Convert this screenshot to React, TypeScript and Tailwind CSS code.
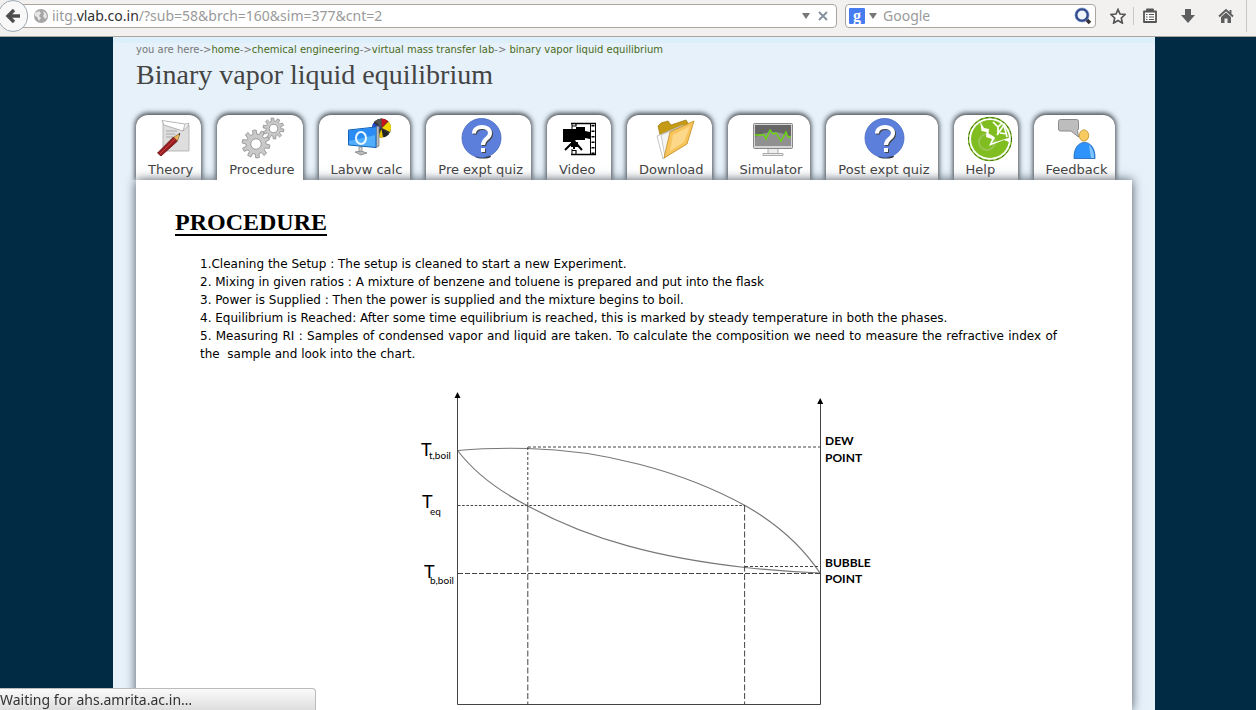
import type { ReactNode } from "react";

function gearPath(cx: number, cy: number, outer: number, inner: number, teeth: number) {
  const step = (Math.PI * 2) / teeth;
  const pts: string[] = [];
  for (let i = 0; i < teeth; i++) {
    const a = i * step + 0.2;
    const corners: [number, number][] = [
      [inner, -0.32],
      [outer, -0.2],
      [outer, 0.2],
      [inner, 0.32],
    ];
    for (const [r, o] of corners) {
      pts.push(`${(cx + r * Math.cos(a + o * step)).toFixed(2)} ${(cy + r * Math.sin(a + o * step)).toFixed(2)}`);
    }
  }
  return `M${pts.join("L")}Z`;
}

function Icon({ children }: { children: ReactNode }) {
  return (
    <svg viewBox="0 0 44 44" className="h-11 w-11 overflow-visible" aria-hidden="true">
      {children}
    </svg>
  );
}

const TheoryIcon = () => (
  <Icon>
    <path d="M14 5L40 8V34H14Z" fill="#dedede" stroke="#aaa" strokeWidth=".8" />
    <path d="M13 3.500L36 7L40 6.500L34 14L15 8Z" fill="#fff" stroke="#999" strokeWidth=".7" />
    <path d="M36 7L34 14L39.500 9" fill="#eee" stroke="#999" strokeWidth=".6" />
    <path d="M17 14H28M17 17H26M17 20H24" stroke="#aaa" strokeWidth="1" />
    <path d="M8.500 36L24.500 20L28.500 24L12 39Z" fill="#9c1c1f" stroke="#5e0d10" strokeWidth=".8" />
    <path d="M24.500 20L31 16.500L28.500 24Z" fill="#e8b65a" stroke="#7b4b19" strokeWidth=".5" />
    <path d="M29.300 17L31 16L30.500 18.500Z" fill="#222" />
    <path d="M11 37L26 21.800" stroke="#c54a4a" strokeWidth="1" />
  </Icon>
);

const ProcedureIcon = () => (
  <Icon>
    <g fill="#c9c9c9" stroke="#8b8b8b" strokeWidth=".8" strokeLinejoin="round">
      <path d={gearPath(16, 27, 14, 10, 10)} />
      <path d={gearPath(33.5, 11.5, 10.5, 7.4, 10)} />
      <circle cx="16" cy="27" r="5.2" fill="#fff" />
      <circle cx="33.5" cy="11.5" r="4.2" fill="#fff" />
    </g>
  </Icon>
);

const LabvwIcon = () => (
  <Icon>
    <circle cx="37.500" cy="11" r="9.500" fill="#333" />
    <path d="M37.500 11V1.500A9.500 9.500 0 0 1 44 4Z" fill="#c8131b" />
    <path d="M38 11L44.500 4.500A9.500 9.500 0 0 1 46 15Z" fill="#f2d500" />
    <path d="M37.500 12L45 17A9.500 9.500 0 0 1 40 20.200Z" fill="#222" />
    <path d="M37.500 12L39 20.500A9.500 9.500 0 0 1 34 20Z" fill="#e3c500" />
    <path d="M37.500 11L29.500 6A9.500 9.500 0 0 0 28.500 14Z" fill="#2547d0" />
    <path d="M37.500 11L31 4A9.500 9.500 0 0 1 37.500 1.500Z" fill="#555" />
    <path d="M15 30H18V36H15Z" fill="#ddd" stroke="#777" strokeWidth=".7" />
    <path d="M11 35L17 38L23 36L17 34Z" fill="#bbb" stroke="#777" strokeWidth=".7" />
    <path d="M32 10L35 9V29L32 30.500Z" fill="#bbb" stroke="#777" strokeWidth=".7" />
    <path d="M4.500 13L32 10V30.500L4.500 28Z" fill="#51aefc" stroke="#1263b5" strokeWidth="1" />
    <path d="M5 13.500L31.500 10.500V18L5 24Z" fill="#2b8bf4" />
    <ellipse cx="17" cy="21" rx="5" ry="6" fill="none" stroke="#e9f8ff" strokeWidth="2" />
  </Icon>
);

const QuizIcon = () => (
  <Icon>
    <ellipse cx="24" cy="39.500" rx="8" ry="2" fill="#333" />
    <circle cx="22.500" cy="21" r="19.500" fill="#5b7fdb" stroke="#4467c3" strokeWidth=".8" />
    <g fill="none" stroke="#444" strokeWidth="4" transform="translate(1 1)">
      <path d="M15 16.500C15 8 31 8 31 16C31 22 24 21 24 28" />
      <path d="M24 31V35" />
    </g>
    <g fill="none" stroke="#fff" strokeWidth="4">
      <path d="M15 16.500C15 8 31 8 31 16C31 22 24 21 24 28" />
      <path d="M24 31V35" />
    </g>
  </Icon>
);

const VideoIcon = () => (
  <Icon>
    <path d="M12 6.500H37M12 37.500H37" stroke="#000" strokeWidth="1.500" />
    <path d="M13 6V12M13 32V38M31.500 6V38M36.500 6V38" stroke="#000" />
    <path d="M34 8V37" stroke="#000" strokeWidth="3" strokeDasharray="1.500 4" />
    <path d="M13 9H17V6M13 33.500H17V37" fill="none" stroke="#000" strokeWidth="1.200" />
    <path d="M4 12H17V10H26V14L31 15V22L26 21V23H17L14 25H4Z" fill="#000" />
    <path d="M15 24L6 33M15 24L23 33M15 24V32M13 26H18V29H13Z" stroke="#000" strokeWidth="2" />
  </Icon>
);

const DownloadIcon = () => (
  <Icon>
    <path d="M9 9L12 6L19 4L22 8L37 3L39 6L36 12L12 22Z" fill="#c59b16" stroke="#9b7710" strokeWidth=".7" />
    <path d="M8 19L34 8L36 26L14 42Z" fill="#fff" stroke="#aaa" strokeWidth=".7" />
    <path d="M12 18L36 8L16 40Z" fill="#f4f4f4" stroke="#aaa" strokeWidth=".6" />
    <path d="M21 15L45 4L38 27L15 41Z" fill="#f8c55d" stroke="#c38c1c" strokeWidth=".8" />
    <path d="M24 18L41 9L35 25L21 34Z" fill="#fde5a8" opacity=".6" />
  </Icon>
);

const SimulatorIcon = () => (
  <Icon>
    <path d="M19 31H29V37H19Z" fill="#eee" stroke="#999" strokeWidth=".8" />
    <path d="M14 36.500H34V38.500H14Z" fill="#eee" stroke="#999" strokeWidth=".8" />
    <rect x="4.500" y="6.500" width="39" height="25" rx="1" fill="#d5d5d5" stroke="#888" />
    <rect x="6" y="8" width="36" height="21" fill="#666" />
    <path d="M6 20Q24 10 42 20V29H6Z" fill="#909090" />
    <path d="M6 18H15L17 22L21 13L24 17L27 16L32 24L37 15L39 20H42" fill="none" stroke="#69d80b" strokeWidth="1.400" />
  </Icon>
);

const HelpIcon = () => (
  <Icon>
    <circle cx="24" cy="22" r="21.500" fill="#fff" stroke="#78b51d" strokeWidth="1.300" />
    <circle cx="24" cy="22" r="21.500" fill="none" stroke="#315611" strokeWidth=".8" strokeDasharray="3 3" />
    <circle cx="24" cy="22" r="19" fill="#7fbd20" />
    <circle cx="21" cy="25" r="8" fill="none" stroke="#99c653" strokeWidth="2" />
    <path d="M14 4L18 11L23 12L22.500 16.500L29 20.500L26 26L44 20.500L43 25L38 23L23 29L26 22L20 20L20.500 15L15.500 14Z" fill="#fff" />
    <path d="M27 5L32 10L32 17M32 10L36 6M31 18L38 8L41 20M34 16L41 17" fill="none" stroke="#fff" strokeWidth="1.700" />
  </Icon>
);

const FeedbackIcon = () => (
  <Icon>
    <path d="M5.500 2.500H21.500Q23.500 2.500 23.500 4.500V12L22.500 13.500L23.500 20L16 14H5.500Q3.500 14 3.500 12V4.500Q3.500 2.500 5.500 2.500Z" fill="#bdbdbd" stroke="#8b8b8b" />
    <path d="M19 41.500C18 20 41 20 40 41.500Z" fill="#2e93fa" stroke="#1d62b2" strokeWidth=".8" />
    <path d="M34 28Q39 32 39 41H36Z" fill="#83c4ff" />
    <ellipse cx="29" cy="18.500" rx="4.700" ry="5.600" fill="#f8cb61" stroke="#bd8a25" strokeWidth=".8" />
  </Icon>
);

const tabs: { label: string; icon: ReactNode; active?: boolean }[] = [
  { label: "Theory", icon: <TheoryIcon /> },
  { label: "Procedure", icon: <ProcedureIcon />, active: true },
  { label: "Labvw calc", icon: <LabvwIcon /> },
  { label: "Pre expt quiz", icon: <QuizIcon /> },
  { label: "Video", icon: <VideoIcon /> },
  { label: "Download", icon: <DownloadIcon /> },
  { label: "Simulator", icon: <SimulatorIcon /> },
  { label: "Post expt quiz", icon: <QuizIcon /> },
  { label: "Help", icon: <HelpIcon /> },
  { label: "Feedback", icon: <FeedbackIcon /> },
];

function Toolbar() {
  return (
    <header className="flex h-[37px] shrink-0 items-start border-b border-[#aaa69f] bg-[#f2f1f0] font-['Noto_Sans',sans-serif] text-sm text-[#9a9a9a]">
      <button
        aria-label="Back"
        className="relative -ml-[2px] flex h-8 w-[30px] shrink-0 items-center justify-center rounded-full border border-[#9ca7b0] bg-[#f8f8f8]"
      >
        <svg viewBox="0 0 16 16" className="h-4 w-4" aria-hidden="true">
          <path d="M9 2L3 8L9 14M3 8H15" fill="none" stroke="#4d4d4d" strokeWidth="3.400" />
        </svg>
      </button>
      <div className="-ml-2 mt-1 flex h-6 min-w-0 flex-1 items-center rounded-r-sm border border-[#aaa69f] bg-white pl-[13px] pr-1">
        <svg viewBox="0 0 14 14" className="mr-1 h-[14px] w-[14px] shrink-0" aria-hidden="true">
          <circle cx="7" cy="7" r="7" fill="#a5a5a5" />
          <path d="M1 4L5 2L7 4L5 7L7 9L5 12L3 8L1 7ZM9 2L12 4L13 8L11 10L9 7L10 5Z" fill="#e6e6e6" />
        </svg>
        <label htmlFor="address" className="shrink-0">
          iitg.<span className="text-[#303030]">vlab.co.in</span>
        </label>
        <input id="address" defaultValue="/?sub=58&brch=160&sim=377&cnt=2" className="min-w-0 flex-1 bg-transparent outline-none" />
        <button aria-label="Show history" className="p-1">
          <svg viewBox="0 0 8 6" className="h-[6px] w-2" aria-hidden="true">
            <path d="M0 0H8L4 6Z" fill="#777" />
          </svg>
        </button>
        <button aria-label="Stop loading" className="p-1">
          <svg viewBox="0 0 10 10" className="h-[10px] w-[10px]" aria-hidden="true">
            <path d="M1 1L9 9M9 1L1 9" stroke="#8793a0" strokeWidth="2" />
          </svg>
        </button>
      </div>
      <div className="ml-2 mt-1 flex h-6 w-[251px] shrink-0 items-center rounded-sm border border-[#aaa69f] bg-white px-[3px]">
        <button aria-label="Choose search engine" className="flex items-center gap-1">
          <span className="flex h-4 w-4 items-center justify-center rounded-[1px] bg-[#467cf0] font-['Liberation_Serif',serif] text-base leading-3 font-bold text-white">
            g
          </span>
          <svg viewBox="0 0 8 6" className="h-[6px] w-2" aria-hidden="true">
            <path d="M0 0H8L4 6Z" fill="#777" />
          </svg>
        </button>
        <input aria-label="Search" placeholder="Google" className="ml-[6px] min-w-0 flex-1 bg-transparent outline-none placeholder:text-[#9a9a9a]" />
        <button aria-label="Submit search">
          <svg viewBox="0 0 18 18" className="h-[18px] w-[18px]" aria-hidden="true">
            <path d="M12 12L16 16" stroke="#333" strokeWidth="3.500" />
            <circle cx="8" cy="8" r="5.800" fill="#eef5fb" stroke="#344b92" strokeWidth="2.600" />
            <circle cx="8" cy="8" r="7" fill="none" stroke="#718cbd" strokeWidth=".7" />
          </svg>
        </button>
      </div>
      <div className="flex h-8 shrink-0 items-center">
        <button aria-label="Bookmark this page" className="ml-[14px] mr-[7px]">
          <svg viewBox="0 0 16 16" className="h-4 w-4" aria-hidden="true">
            <path d="M8 1.500L10 6L15 6.500L11.300 10L12.300 15L8 12.500L3.700 15L4.700 10L1 6.500L6 6Z" fill="#fafafa" stroke="#555" strokeWidth="1.700" />
          </svg>
        </button>
        <span className="h-[18px] w-px bg-[#c8c8c8]" />
        <button aria-label="Show bookmarks" className="ml-2">
          <svg viewBox="0 0 16 16" className="h-4 w-4" aria-hidden="true">
            <path d="M2 3.500H14V14H2ZM5 3V1.500H11V3" fill="#fafafa" stroke="#555" strokeWidth="1.800" strokeLinejoin="round" />
            <path d="M4 6.500H5.500M7 6.500H12M4 9H5.500M7 9H12M4 11.500H5.500M7 11.500H12" stroke="#555" strokeWidth="1.100" />
          </svg>
        </button>
        <button aria-label="Downloads" className="ml-[22px]">
          <svg viewBox="0 0 16 16" className="h-4 w-4" aria-hidden="true">
            <path d="M5 1H11V7H15L8 15L1 7H5Z" fill="#5e5e5e" />
          </svg>
        </button>
        <button aria-label="Home page" className="ml-[22px]">
          <svg viewBox="0 0 16 16" className="h-4 w-4" aria-hidden="true">
            <path d="M1 8.500L8 2L15 8.500M12.500 2V6" fill="none" stroke="#5e5e5e" strokeWidth="1.900" />
            <path d="M3 9L8 4.500L13 9V15H9.500V10.500H6.500V15H3Z" fill="#5e5e5e" />
          </svg>
        </button>
        <span className="ml-3 mr-[9px] h-8 w-px bg-[#c8c8c8]" />
      </div>
    </header>
  );
}

function PhaseDiagram() {
  return (
    <svg viewBox="416 388 460 320" className="mx-auto mt-[25px] block h-80 w-[460px]" role="img" aria-label="Boiling point diagram" fontFamily="Lato, sans-serif">
      <g fill="none" stroke="#444" strokeWidth="1">
        <path d="M457.500 396V704.500H820.500V402" />
        <path d="M458 450.500C480 448.500 500 447.800 528 448.500C600 450 680 470 745 505.500C776 523 802 546 820 573" stroke="#777" strokeWidth="1.200" />
        <path d="M458 451C474 472 497 490 528 506C590 540 660 558 745 567.500C768 570 792 572 820 573" stroke="#777" strokeWidth="1.200" />
        <path d="M528 447H820" strokeDasharray="3 2" />
        <path d="M458 505.500H745" strokeDasharray="2.500 1.700" />
        <path d="M745 566.500H820" strokeDasharray="3 2" />
        <path d="M458 573.500H820" strokeDasharray="5 2" />
        <path d="M527.800 447V506" strokeDasharray="3 2" />
        <path d="M527.800 506V704M744.600 506V704" strokeDasharray="6 2.500" />
      </g>
      <path d="M457.500 392L460.500 398H454.500ZM820.200 398L823.200 404H817.200Z" />
      <g fontSize="18">
        <text x="421" y="456">
          T<tspan x="429" y="459" fontSize="10">t,boil</tspan>
        </text>
        <text x="422" y="508">
          T<tspan x="430" y="515" fontSize="10">eq</tspan>
        </text>
        <text x="424" y="578">
          T<tspan x="430" y="584" fontSize="10">b,boil</tspan>
        </text>
      </g>
      <g fontSize="12" fontWeight="700">
        <text x="825" y="445">DEW</text>
        <text x="825" y="462">POINT</text>
        <text x="825" y="567">BUBBLE</text>
        <text x="825" y="583">POINT</text>
      </g>
    </svg>
  );
}

export default function App() {
  return (
    <div className="flex min-h-screen flex-col bg-[#012a44] font-['DejaVu_Sans',sans-serif]">
      <Toolbar />
      <div className="flex flex-1 pl-3">
        <main className="mx-auto flex w-full max-w-[1042px] flex-col border-t-[6px] border-[#dceffa] bg-[#e6f1fa] px-[23px]">
          <nav aria-label="Breadcrumb" className="text-[10px] leading-[14px] whitespace-nowrap text-[#777]">
            you are here-&gt;<a href="#home" className="text-[#4a6b20]">home</a>-&gt;<a href="#chemical" className="text-[#4a6b20]">chemical engineering</a>-&gt;<a href="#lab" className="text-[#4a6b20]">virtual mass transfer lab</a>-&gt; <a href="#experiment" className="text-[#4a6b20]">binary vapor liquid equilibrium</a>
          </nav>
          <h1 className="font-['Liberation_Serif',serif] text-[28px] leading-9 text-[#444]">Binary vapor liquid equilibrium</h1>
          <nav aria-label="Experiment" className="mt-[22px] flex gap-4">
            {tabs.map((tab) => (
              <a
                key={tab.label}
                href={`#${tab.label.toLowerCase().replaceAll(" ", "-")}`}
                aria-current={tab.active ? "page" : undefined}
                className={
                  "flex h-[65px] flex-col rounded-t-xl bg-white pt-[2px] pr-2 pl-3 text-[13px] leading-[18px] whitespace-nowrap text-[#444] shadow-[0_-1px_5px_1px_#3f4348] [clip-path:inset(-8px_-8px_0_-8px)] " +
                  (tab.active ? "relative z-10" : "")
                }
              >
                <span className="flex justify-center">{tab.icon}</span>
                <span>{tab.label}</span>
              </a>
            ))}
          </nav>
          <article className="relative flex-1 bg-white px-[39px] pt-7 text-black shadow-[0_0_10px_#4a5560]">
            <h2 className="font-['Liberation_Serif',serif] text-2xl leading-7 font-bold underline decoration-2 underline-offset-4">PROCEDURE</h2>
            <div className="mr-9 ml-[25px] mt-[19px] text-justify text-xs leading-[18px]">
              <p>1.Cleaning the Setup : The setup is cleaned to start a new Experiment.</p>
              <p>2. Mixing in given ratios : A mixture of benzene and toluene is prepared and put into the flask</p>
              <p>3. Power is Supplied : Then the power is supplied and the mixture begins to boil.</p>
              <p>4. Equilibrium is Reached: After some time equilibrium is reached, this is marked by steady temperature in both the phases.</p>
              <p>5. Measuring RI : Samples of condensed vapor and liquid are taken. To calculate the composition we need to measure the refractive index of the&nbsp; sample and look into the chart.</p>
            </div>
            <div className="pl-6">
              <PhaseDiagram />
            </div>
          </article>
        </main>
      </div>
      <div role="status" className="fixed bottom-0 left-0 z-20 h-[22px] w-[316px] rounded-tr border-t border-r border-[#bbb] bg-linear-to-b from-[#fafafa] to-[#dedede] font-['Noto_Sans',sans-serif] text-sm leading-[22px] text-[#333]">
        Waiting for ahs.amrita.ac.in…
      </div>
    </div>
  );
}
